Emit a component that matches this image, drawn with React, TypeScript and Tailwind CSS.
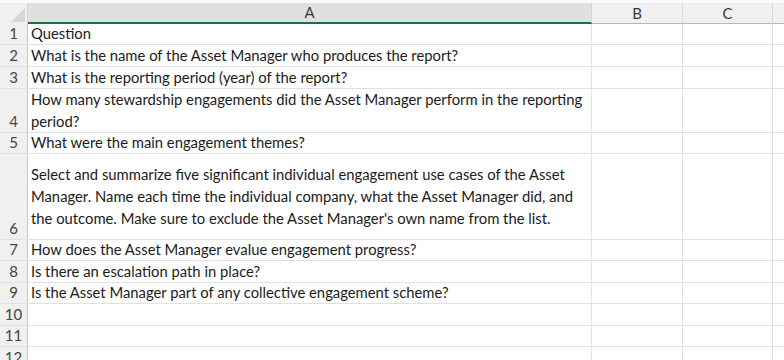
const rows: { h: number; lines: string[]; pb?: number }[] = [
  { h: 21, lines: ["Question"] },
  { h: 22, lines: ["What is the name of the Asset Manager who produces the report?"] },
  { h: 22, lines: ["What is the reporting period (year) of the report?"] },
  {
    h: 44,
    lines: [
      "How many stewardship engagements did the Asset Manager perform in the reporting",
      "period?",
    ],
  },
  { h: 21, lines: ["What were the main engagement themes?"] },
  {
    h: 86,
    pb: 10,
    lines: [
      "Select and summarize five significant individual engagement use cases of the Asset",
      "Manager. Name each time the individual company, what the Asset Manager did, and",
      "the outcome. Make sure to exclude the Asset Manager's own name from the list.",
    ],
  },
  { h: 21, lines: ["How does the Asset Manager evalue engagement progress?"] },
  { h: 22, lines: ["Is there an escalation path in place?"] },
  { h: 21, lines: ["Is the Asset Manager part of any collective engagement scheme?"] },
  { h: 22, lines: [] },
  { h: 21, lines: [] },
  { h: 22, lines: [] },
];

export default function App() {
  return (
    <div
      className="w-[784px] h-[360px] overflow-hidden bg-white"
      style={{ fontFamily: "Lato, 'Open Sans', sans-serif" }}
    >
      {/* column headers */}
      <div className="flex h-[24px] pt-[3px] bg-[#fafafa]">
        <div className="relative w-[28px] shrink-0 bg-[#f0f0f0] border-r border-[#d4d4d4]">
          <div className="absolute right-[2px] bottom-[2px] w-0 h-0 border-l-[14px] border-l-transparent border-b-[14px] border-b-[#d6d6d6]" />
        </div>
        <div className="w-[564px] shrink-0 flex items-center justify-center bg-[#e0e0e0] border-b-2 border-[#1e6e42] border-r border-r-[#d4d4d4] text-[15px] text-[#3a3a3a]">
          A
        </div>
        <div className="w-[91px] shrink-0 flex items-center justify-center bg-[#f0f0f0] border-b border-[#b8b8b8] border-r border-r-[#d8d8d8] text-[15px] text-[#3a3a3a]">
          B
        </div>
        <div className="w-[90px] shrink-0 flex items-center justify-center bg-[#f0f0f0] border-b border-[#b8b8b8] border-r border-r-[#d8d8d8] text-[15px] text-[#3a3a3a]">
          C
        </div>
        <div className="flex-1 bg-[#f0f0f0] border-b border-[#b8b8b8]" />
      </div>

      {/* rows */}
      {rows.map((r, i) => (
        <div key={i} className="flex border-b border-[#e1e1e1]" style={{ height: r.h }}>
          <div className="w-[28px] shrink-0 flex items-end justify-center bg-[#f0f0f0] border-r border-[#c6c6c6] text-[15px] leading-[21px] text-[#444]">
            {i + 1}
          </div>
          <div
            className="w-[564px] shrink-0 flex flex-col justify-end pl-[3px] border-r border-[#e1e1e1] text-[14.8px] leading-[22px] text-[#1b1b1b] whitespace-nowrap overflow-hidden"
            style={{ paddingBottom: r.pb ?? 0 }}
          >
            {r.lines.map((l, j) => (
              <div key={j}>{l}</div>
            ))}
          </div>
          <div className="w-[91px] shrink-0 border-r border-[#e1e1e1]" />
          <div className="w-[90px] shrink-0 border-r border-[#e1e1e1]" />
          <div className="flex-1" />
        </div>
      ))}
    </div>
  );
}
